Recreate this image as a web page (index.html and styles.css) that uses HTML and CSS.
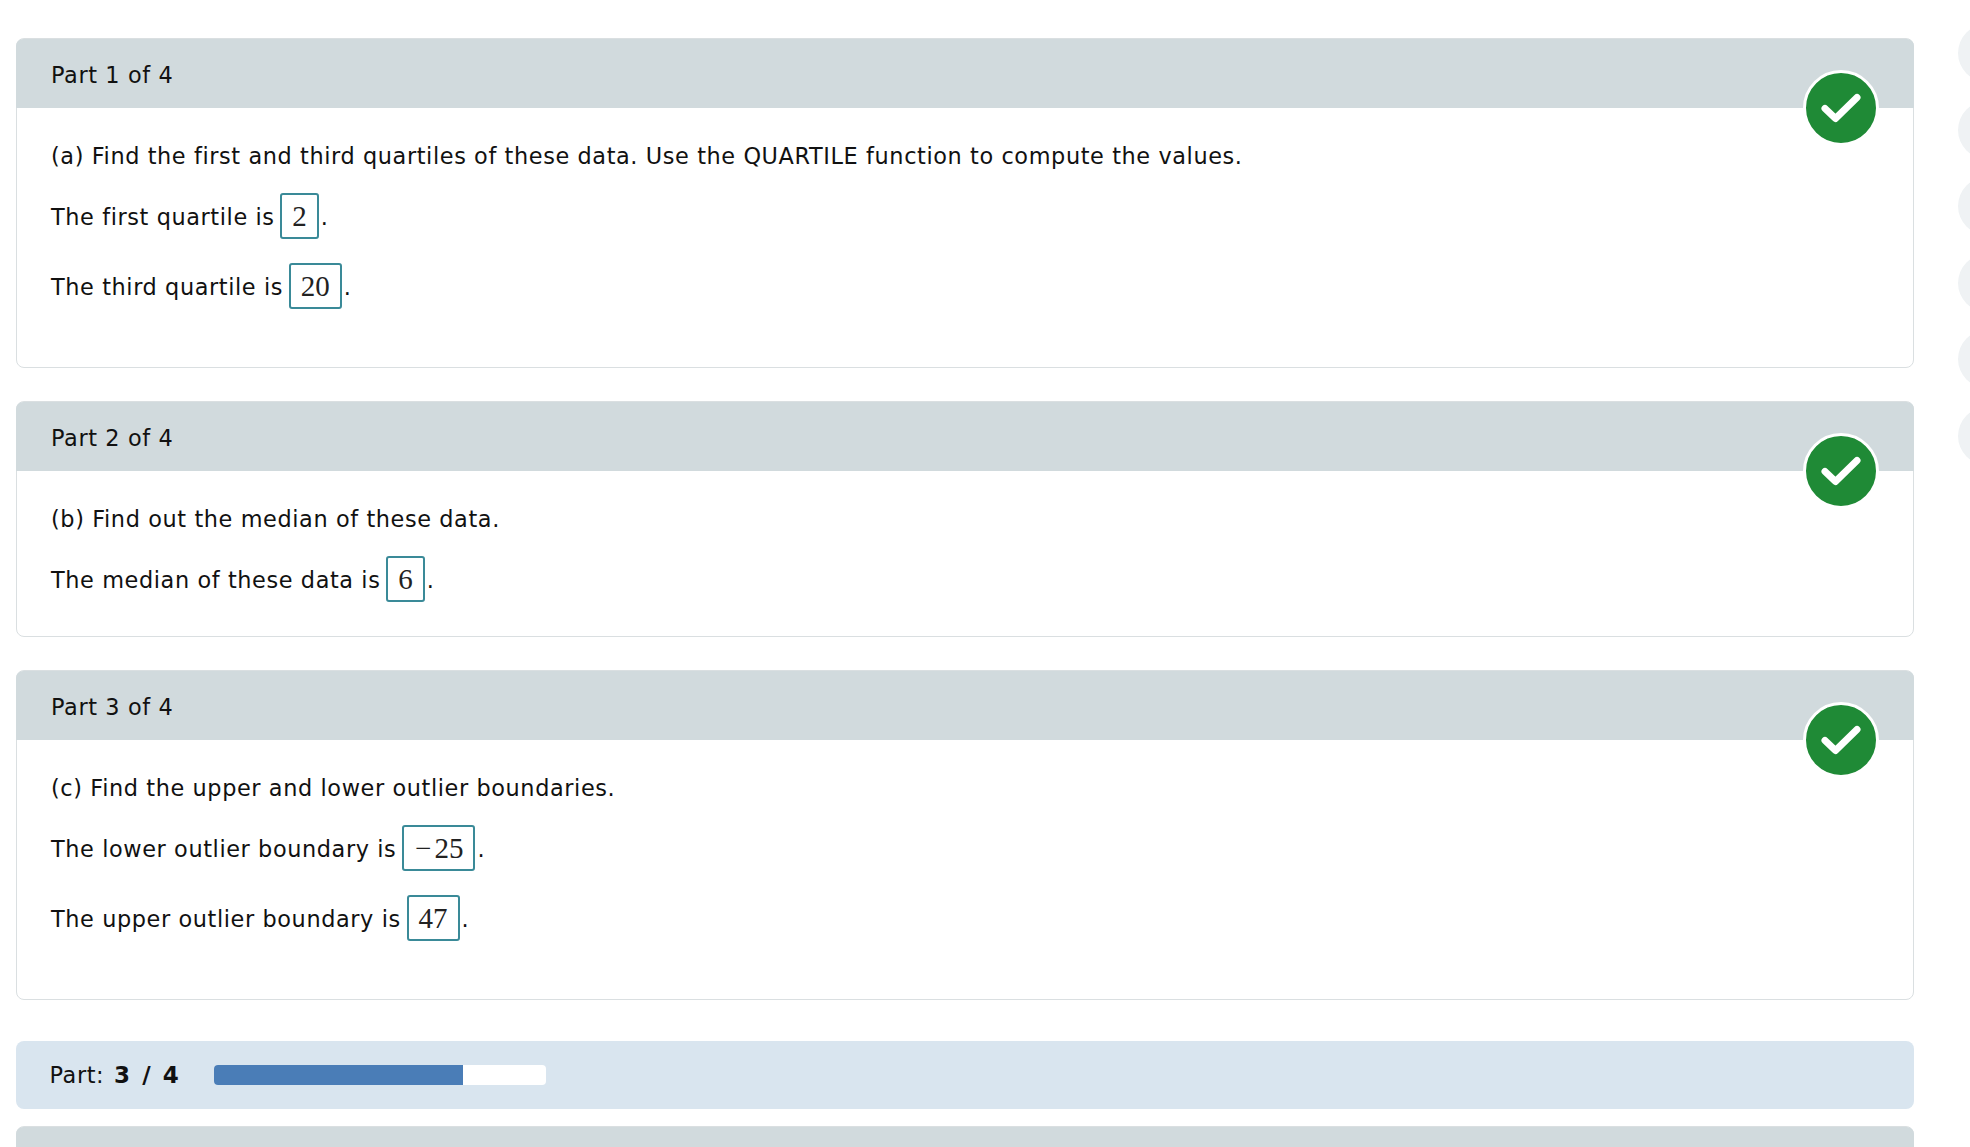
FILE: index.html
```html
<!DOCTYPE html>
<html lang="en">

<head>
    <meta charset="UTF-8">
    <meta name="viewport" content="width=device-width, initial-scale=1.0">
    <title>Quartiles and Outliers</title>
    <link rel="stylesheet" href="styles.css">
</head>

<body>
    <div class="page">
        <main class="parts">
            <section class="part">
                <div class="part-header">Part 1 of 4</div>
                <svg class="check" viewBox="0 0 76 76"><circle cx="38" cy="38" r="36.5" fill="#1f8a36" stroke="#fff" stroke-width="3"/><path d="M22 38.500 L32.500 48.500 L54 27.500" fill="none" stroke="#fff" stroke-width="7" stroke-linecap="round" stroke-linejoin="round"/></svg>
                <div class="part-body">
                    <p class="line">(a) Find the first and third quartiles of these data. Use the QUARTILE function to compute the values.</p>
                    <p class="line">The first quartile is <span class="answer">2</span>.</p>
                    <p class="line">The third quartile is <span class="answer">20</span>.</p>
                </div>
            </section>

            <section class="part part-short">
                <div class="part-header">Part 2 of 4</div>
                <svg class="check" viewBox="0 0 76 76"><circle cx="38" cy="38" r="36.5" fill="#1f8a36" stroke="#fff" stroke-width="3"/><path d="M22 38.500 L32.500 48.500 L54 27.500" fill="none" stroke="#fff" stroke-width="7" stroke-linecap="round" stroke-linejoin="round"/></svg>
                <div class="part-body">
                    <p class="line">(b) Find out the median of these data.</p>
                    <p class="line">The median of these data is <span class="answer">6</span>.</p>
                </div>
            </section>

            <section class="part">
                <div class="part-header">Part 3 of 4</div>
                <svg class="check" viewBox="0 0 76 76"><circle cx="38" cy="38" r="36.5" fill="#1f8a36" stroke="#fff" stroke-width="3"/><path d="M22 38.500 L32.500 48.500 L54 27.500" fill="none" stroke="#fff" stroke-width="7" stroke-linecap="round" stroke-linejoin="round"/></svg>
                <div class="part-body">
                    <p class="line">(c) Find the upper and lower outlier boundaries.</p>
                    <p class="line">The lower outlier boundary is <span class="answer"><span class="minus">−</span>25</span>.</p>
                    <p class="line">The upper outlier boundary is <span class="answer">47</span>.</p>
                </div>
            </section>

            <div class="progress">
                <span class="progress-label">Part: <strong>3 / 4</strong></span>
                <div class="progress-track"><div class="progress-fill" style="width: 75%"></div></div>
            </div>

            <section class="part part-next">
                <div class="part-header"></div>
            </section>
        </main>

        <aside class="rail">
            <div class="dot"></div>
            <div class="dot"></div>
            <div class="dot"></div>
            <div class="dot"></div>
            <div class="dot"></div>
            <div class="dot"></div>
        </aside>
    </div>
</body>

</html>
```

FILE: styles.css
```css
html,
body {
    height: 100%;
    margin: 0;
    overflow: hidden;
    background: white;
}

body {
    font-family: "DejaVu Sans", Verdana, sans-serif;
    font-size: 22.4px;
    letter-spacing: 0.6px;
    color: #111;
}

.page {
    display: flex;
    height: 100%;
}

.parts {
    width: 1898px;
    margin-left: 16px;
    padding-top: 38px;
}

.part {
    position: relative;
    height: 330px;
    margin-bottom: 33px;
    box-sizing: border-box;
    border: 1px solid #dadfe1;
    border-radius: 8px;
}

.part-short {
    height: 236px;
}

.part-next {
    height: 60px;
    margin: 0;
}

.part-header {
    height: 69px;
    margin: 0 -1px;
    padding-left: 35px;
    line-height: 72px;
    background: #d1dadd;
    border-radius: 7px 7px 0 0;
}

.check {
    position: absolute;
    top: 31px;
    right: 34px;
    width: 76px;
    height: 76px;
}

.part-body {
    padding: 30px 34px 0;
}

.line {
    display: flex;
    align-items: center;
    height: 46px;
    margin: 0 0 24px;
    white-space: pre;
}

.line:first-child {
    height: 36px;
    margin-bottom: 20px;
}

.answer {
    margin: -2px 2px 0 -2px;
    padding: 0 10px;
    height: 46px;
    line-height: 43px;
    box-sizing: border-box;
    border: 2px solid #3a8a98;
    border-radius: 3px;
    font-family: "Liberation Serif", "Times New Roman", serif;
    font-size: 29px;
    letter-spacing: 0;
    color: #222;
}

.minus {
    margin: 0 3px 0 1px;
}

.progress {
    display: flex;
    align-items: center;
    height: 68px;
    margin: 41px 0 17px;
    padding-left: 33.500px;
    background: #d9e5ef;
    border-radius: 8px;
}

.progress-label {
    width: 164px;
    flex: none;
}

.progress-label strong {
    margin-left: 2px;
    font-size: 23px;
    word-spacing: 3px;
}

.progress-track {
    width: 332px;
    height: 20px;
    background: white;
    border-radius: 4px;
    overflow: hidden;
}

.progress-fill {
    height: 100%;
    background: #4a7db7;
}

.rail {
    display: flex;
    flex-direction: column;
    gap: 18.600px;
    margin-left: 44px;
    padding-top: 24px;
    width: 12px;
    overflow: hidden;
}

.dot {
    flex: none;
    width: 58px;
    height: 58px;
    border-radius: 50%;
    background: #eff2f4;
}
```
